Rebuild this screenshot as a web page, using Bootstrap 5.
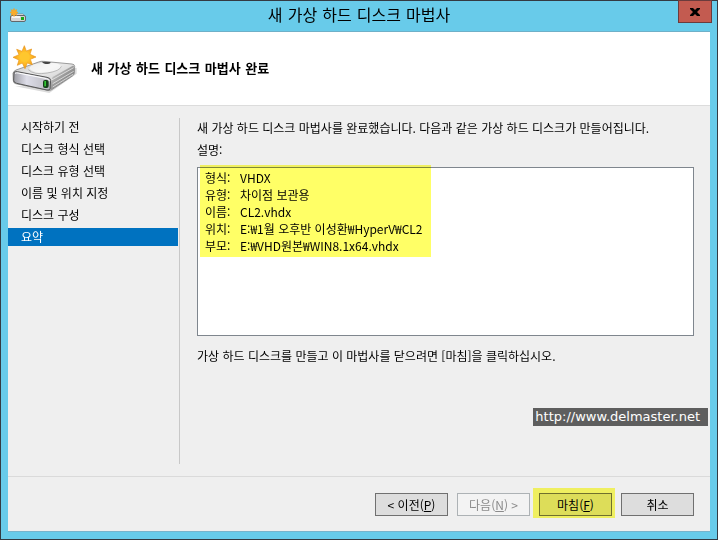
<!DOCTYPE html>
<html lang="ko">
<head>
<meta charset="utf-8">
<meta name="viewport" content="width=device-width, initial-scale=1">
<title>새 가상 하드 디스크 마법사</title>
<link href="https://cdn.jsdelivr.net/npm/bootstrap@5.3.0/dist/css/bootstrap.min.css" rel="stylesheet">
<style>
  body { font: 12px/18px "Noto Sans CJK KR", sans-serif; color: #000; background: #efefef; }
  .wizard { background: #68cbea; border: 1px solid #343a42; padding: 0 7px 7px; }
  .title-bar { height: 30px; }
  .title-bar h1 { font: 16px/30px "DejaVu Sans", "Noto Sans CJK KR", sans-serif; }
  .app-icon { left: 1px; top: 7px; }
  .close-btn { right: -2px; top: -1px; width: 34px; height: 23px; background: #c35b50; border: 1px solid #6b3b3c; padding: 0; line-height: 1; }
  .wizard-body { background: #efefef; border-top: 1px solid #6fb0c8; border-bottom: 1px solid #78b4cc; }
  .wizard-head { height: 74px; padding-left: 4px; border-bottom: 1px solid #dcdcdc; gap: 11px; }
  .wizard-head h2 { font: bold 13px/18px "DejaVu Sans", "Noto Sans CJK KR", sans-serif; }
  .wizard-main { padding: 12px 16px 12px 0; }
  .steps { width: 172px; border-right: 1px solid #c8c8c8; padding-right: 1px; gap: 4px; }
  .steps .nav-link { color: #000; padding: 0 13px; line-height: 18px; border-radius: 0; }
  .steps .nav-link.active { background: #0072c0; color: #fff; }
  .content-pane { padding-left: 17px; }
  .content-pane p { line-height: 20px; }
  .content-pane .closing { padding-top: 10px; }
  .content-pane .caption-line { margin-top: 2px; }
  .summary-box { height: 169px; margin-top: 7px; border: 1px solid #7f868e; background: #fff; }
  .marked::after { content: ""; position: absolute; background: #ffff66; mix-blend-mode: multiply; pointer-events: none; }
  .summary-list { padding: 1px 8px 0 7px; }
  .summary-list::after { inset: -3px 0 -3px 2px; }
  .summary-list dl { display: grid; grid-template-columns: 35px auto; line-height: 17px; }
  .summary-list dt { font-weight: 400; }
  .site-tag { right: 2px; bottom: 100%; margin-bottom: 51px; height: 18px; padding: 0 8px 0 2px; background: #5e5e5e; color: #fff; font: 13px/18px "DejaVu Sans", sans-serif; }
  .wizard-foot { border-top: 1px solid #dadada; padding: 16px 16px 15px; gap: 9px; }
  .wizard-foot .btn { width: 73px; height: 23px; padding: 0; font-size: 12px; line-height: 20px; border: 1px solid #707070; border-radius: 0; background: #dddddd; color: #000; }
  .wizard-foot .btn:disabled { background: #f3f3f3; border-color: #adb2b5; color: #8b8b8b; opacity: 1; }
  .finish::after { inset: -6px -4px -3px -7px; }
</style>
<script src="https://cdn.jsdelivr.net/npm/bootstrap@5.3.0/dist/js/bootstrap.bundle.min.js"></script>
</head>
<body>
<div class="wizard min-vh-100 d-flex flex-column">
  <header class="title-bar position-relative text-center">
    <svg class="app-icon position-absolute" width="18" height="16" viewBox="0 0 18 16" aria-hidden="true">
      <path d="M2 8l2-2h10l2 2z" fill="#f3f3f3" stroke="#777" stroke-width=".6"/>
      <rect x="1.500" y="7.500" width="15" height="6" rx="1.500" fill="#d5d5d5" stroke="#62676a"/>
      <path d="M3 9h8" stroke="#fff" stroke-width="1.500"/>
      <rect x="12" y="9" width="3" height="3" fill="#18a818"/>
      <path d="M5 0.500l.8 2 2-.8-.8 2 2 .8-2 .8.8 2-2-.8-.8 2-.8-2-2 .8.8-2-2-.8 2-.8-.8-2 2 .8z" fill="#f9ac28" stroke="#f4a42a" stroke-width=".8"/>
    </svg>
    <h1 class="m-0">새 가상 하드 디스크 마법사</h1>
    <button type="button" class="close-btn position-absolute" aria-label="닫기">
      <svg width="10" height="8" viewBox="0 0 10 8" aria-hidden="true" class="d-block mx-auto"><path d="M0 0h3l2 2 2-2h3v1L7 4l3 3v1H7L5 6 3 8H0V7l3-3-3-3z" fill="#000"/></svg>
    </button>
  </header>

  <div class="wizard-body flex-grow-1 d-flex flex-column position-relative">
    <div class="wizard-head bg-white d-flex align-items-center">
      <svg width="68" height="52" viewBox="36 36 204 156" aria-hidden="true">
        <defs>
          <linearGradient id="top" x1="0" y1="0" x2="1" y2="1"><stop offset="0" stop-color="#c2c2c2"/><stop offset=".4" stop-color="#ececec"/><stop offset="1" stop-color="#bdbdbd"/></linearGradient>
          <linearGradient id="front" x1="0" y1="0" x2="1" y2="0"><stop offset="0" stop-color="#9d9da4"/><stop offset=".35" stop-color="#dddde8"/><stop offset="1" stop-color="#b9b9bf"/></linearGradient>
          <linearGradient id="side" x1="0" y1="0" x2="1" y2="1"><stop offset="0" stop-color="#eeeeee"/><stop offset=".5" stop-color="#9a9a9a"/><stop offset="1" stop-color="#555"/></linearGradient>
          <radialGradient id="sun"><stop offset="0" stop-color="#ffd13c"/><stop offset=".6" stop-color="#ffb925"/><stop offset="1" stop-color="#ef9619"/></radialGradient>
        </defs>
        <path d="M46 166l102 20 82-58v-18l-20 5-80 50z" fill="#888" opacity=".3"/>
        <path d="M39 127q1-6 9-10l68-24q7-3 14-2l86 8q8 1 8 7l-1 21q-1 5-6 8l-62 41q-5 3-11 2l-97-20q-7-2-7-8z" fill="url(#top)" stroke="#707070" stroke-width="2"/>
        <path d="M158 138l60-34q5 0 5 6l-1 17q-1 4-6 7l-62 42-7-1z" fill="url(#side)"/>
        <path d="M155 147l66-37M158 158l63-37M158 168l61-38" fill="none" stroke="#f7f7f7" stroke-width="2"/>
        <path d="M88 113q2-16 46-18 48-1 49 12-2 13-38 17-40 4-57-11z" fill="#fff" opacity=".6"/>
        <path d="M85 116q17 17 57 10 38-6 42-20" fill="none" stroke="#a0a0a0" stroke-width="2"/>
        <path d="M126 92l25 1q3 5-8 6-14 0-17-7z" fill="#454545"/>
        <path d="M42 124q4-3 10-2l89 17q11 2 11 9l-2 25q0 5-9 4l-91-20q-9-2-9-9z" fill="url(#front)" stroke="#555" stroke-width="3"/>
        <path d="M45 127q4-2 9-1l86 17q8 2 8 7" fill="none" stroke="#fff" stroke-width="3"/>
        <rect x="129" y="147" width="17" height="24" rx="6" fill="#164119"/>
        <path d="M133 150h5v16h-5z" fill="#32c832"/>
        <path d="M73 44L79 60 95 54 90 70 108 78 91 85 97 101 82 96 75 113 67 96 52 103 57 87 39 79 57 71 50 55 66 61Z" fill="url(#sun)" stroke="#e9991f" stroke-width="2" stroke-linejoin="round"/>
        <circle cx="74" cy="78" r="15" fill="#ffc72e"/>
      </svg>
      <h2 class="m-0">새 가상 하드 디스크 마법사 완료</h2>
    </div>

    <div class="wizard-main flex-grow-1 d-flex">
      <nav class="steps nav nav-pills flex-column flex-shrink-0 flex-nowrap" aria-label="단계">
        <a class="nav-link" href="#">시작하기 전</a>
        <a class="nav-link" href="#">디스크 형식 선택</a>
        <a class="nav-link" href="#">디스크 유형 선택</a>
        <a class="nav-link" href="#">이름 및 위치 지정</a>
        <a class="nav-link" href="#">디스크 구성</a>
        <a class="nav-link active" href="#" aria-current="step">요약</a>
      </nav>
      <main class="content-pane flex-grow-1">
        <p class="mb-0">새 가상 하드 디스크 마법사를 완료했습니다. 다음과 같은 가상 하드 디스크가 만들어집니다.</p>
        <p class="caption-line mb-0">설명:</p>
        <div class="summary-box d-flex align-items-start">
          <div class="summary-list marked position-relative">
            <dl class="m-0">
              <dt>형식:</dt><dd class="m-0">VHDX</dd>
              <dt>유형:</dt><dd class="m-0">차이점 보관용</dd>
              <dt>이름:</dt><dd class="m-0">CL2.vhdx</dd>
              <dt>위치:</dt><dd class="m-0">E:₩1월 오후반 이성환₩HyperV₩CL2</dd>
              <dt>부모:</dt><dd class="m-0">E:₩VHD원본₩WIN8.1x64.vhdx</dd>
            </dl>
          </div>
        </div>
        <p class="closing mb-0">가상 하드 디스크를 만들고 이 마법사를 닫으려면 [마침]을 클릭하십시오.</p>
      </main>
    </div>

    <footer class="wizard-foot d-flex justify-content-end position-relative">
      <div class="site-tag position-absolute">http://www.delmaster.net</div>
      <button type="button" class="btn">&lt; 이전(<u>P</u>)</button>
      <button type="button" class="btn" disabled>다음(<u>N</u>) &gt;</button>
      <button type="button" class="btn finish marked position-relative">마침(<u>F</u>)</button>
      <button type="button" class="btn">취소</button>
    </footer>
  </div>
</div>
</body>
</html>
